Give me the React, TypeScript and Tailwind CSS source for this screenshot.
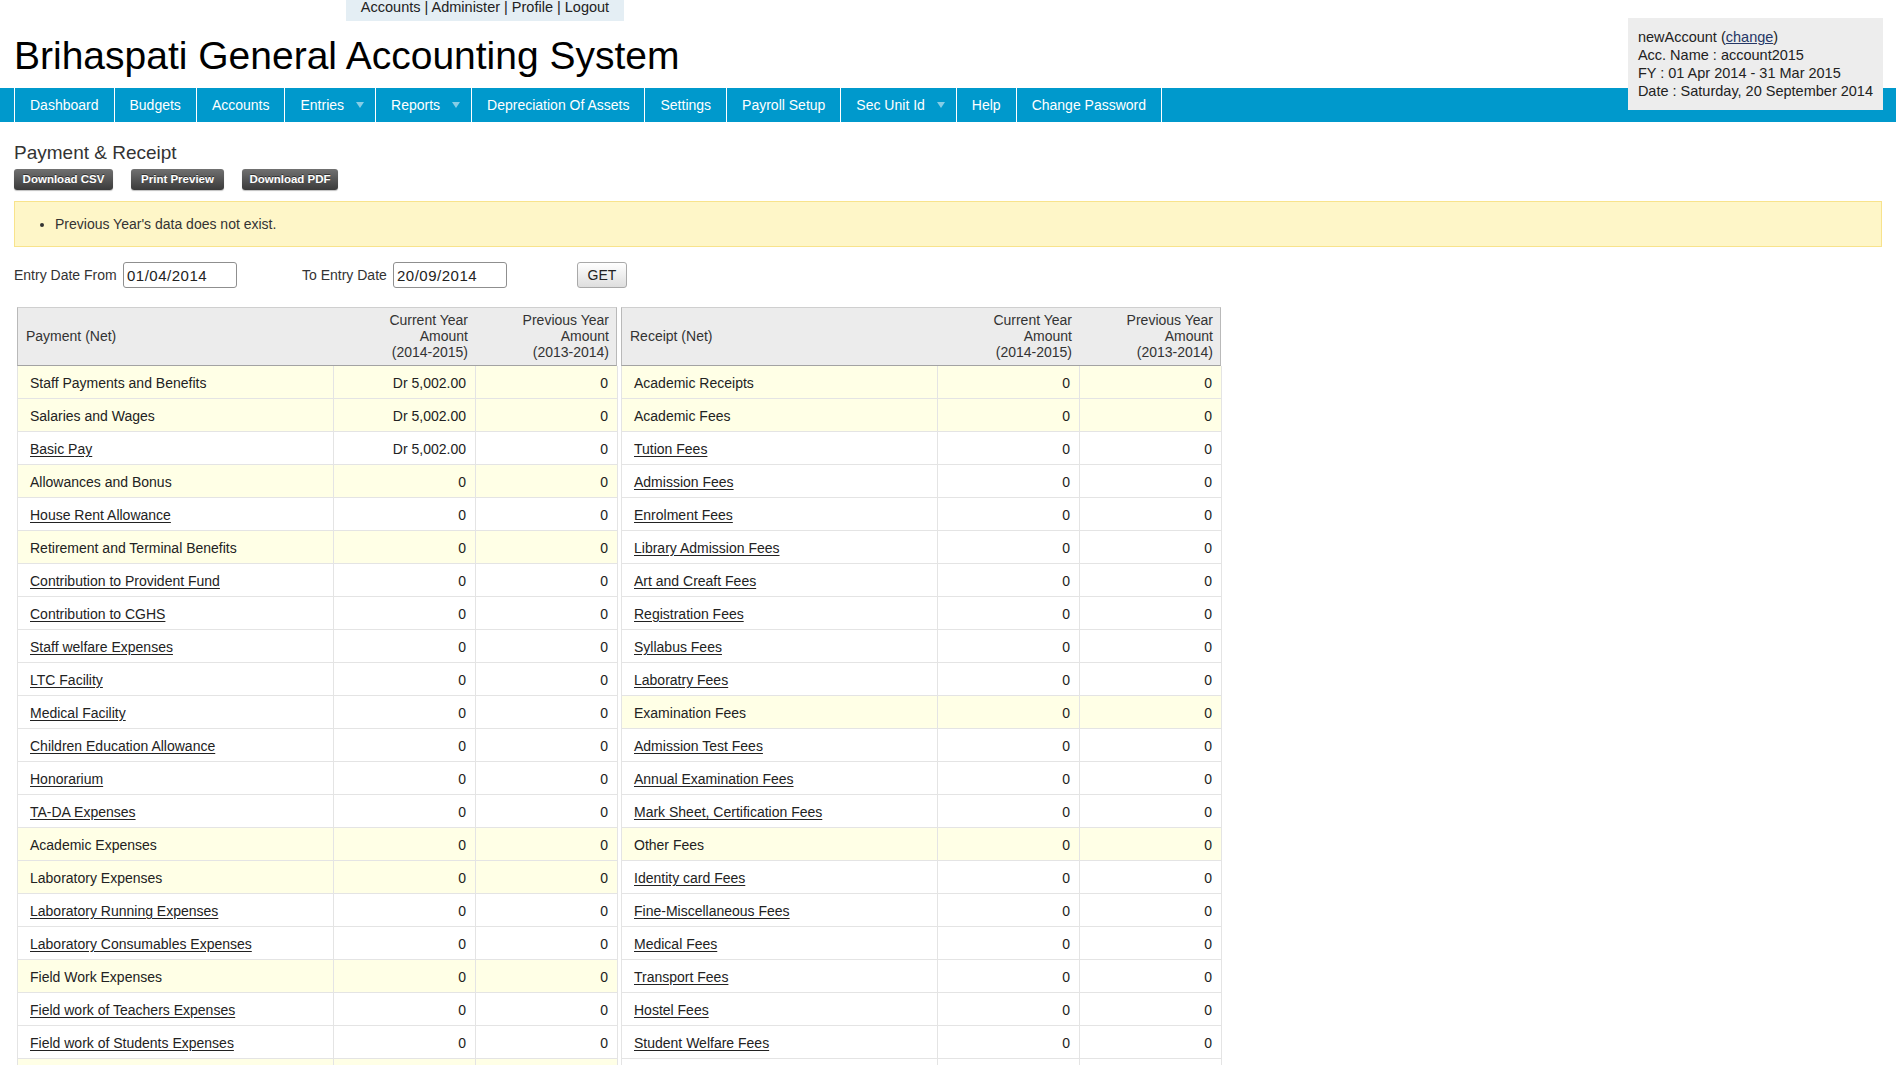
import React from "react";

type Row = { name: string; cur: string; prev: string; link: boolean };

const g = (name: string, cur = "0"): Row => ({ name, cur, prev: "0", link: false });
const l = (name: string, cur = "0"): Row => ({ name, cur, prev: "0", link: true });

const payments: Row[] = [
  g("Staff Payments and Benefits", "Dr 5,002.00"),
  g("Salaries and Wages", "Dr 5,002.00"),
  l("Basic Pay", "Dr 5,002.00"),
  g("Allowances and Bonus"),
  l("House Rent Allowance"),
  g("Retirement and Terminal Benefits"),
  l("Contribution to Provident Fund"),
  l("Contribution to CGHS"),
  l("Staff welfare Expenses"),
  l("LTC Facility"),
  l("Medical Facility"),
  l("Children Education Allowance"),
  l("Honorarium"),
  l("TA-DA Expenses"),
  g("Academic Expenses"),
  g("Laboratory Expenses"),
  l("Laboratory Running Expenses"),
  l("Laboratory Consumables Expenses"),
  g("Field Work Expenses"),
  l("Field work of Teachers Expenses"),
  l("Field work of Students Expenses"),
  g("Library Expenses"),
  l("Books and Journals"),
];

const receipts: Row[] = [
  g("Academic Receipts"),
  g("Academic Fees"),
  l("Tution Fees"),
  l("Admission Fees"),
  l("Enrolment Fees"),
  l("Library Admission Fees"),
  l("Art and Creaft Fees"),
  l("Registration Fees"),
  l("Syllabus Fees"),
  l("Laboratry Fees"),
  g("Examination Fees"),
  l("Admission Test Fees"),
  l("Annual Examination Fees"),
  l("Mark Sheet, Certification Fees"),
  g("Other Fees"),
  l("Identity card Fees"),
  l("Fine-Miscellaneous Fees"),
  l("Medical Fees"),
  l("Transport Fees"),
  l("Hostel Fees"),
  l("Student Welfare Fees"),
  l("Internet Fees"),
  l("Other Academic Fees"),
];

const navItems: { label: string; drop?: boolean }[] = [
  { label: "Dashboard" },
  { label: "Budgets" },
  { label: "Accounts" },
  { label: "Entries", drop: true },
  { label: "Reports", drop: true },
  { label: "Depreciation Of Assets" },
  { label: "Settings" },
  { label: "Payroll Setup" },
  { label: "Sec Unit Id", drop: true },
  { label: "Help" },
  { label: "Change Password" },
];

function ReportTable({ title, rows }: { title: string; rows: Row[] }) {
  return (
    <div className="w-[600px] text-[14px]">
      <div className="grid grid-cols-[316px_142px_142px] border border-[#b9b9b9] border-t-[#cfcfcf] border-b-[#a3a3a3] bg-[#ececec] text-[#333]">
        <div className="flex items-center pl-[8px]">{title}</div>
        <div className="pt-[4px] pb-[5px] pr-[8px] text-right leading-[16px]">
          <div>Current Year</div>
          <div>Amount</div>
          <div>(2014-2015)</div>
        </div>
        <div className="pt-[4px] pb-[5px] pr-[9px] text-right leading-[16px]">
          <div>Previous Year</div>
          <div>Amount</div>
          <div>(2013-2014)</div>
        </div>
      </div>
      {rows.map((r, i) => (
        <div
          key={i}
          className={`grid grid-cols-[316px_142px_142px] border-l border-[#e4e4e4] leading-[16px] ${
            r.link ? "bg-white" : "bg-[#ffffe6]"
          }`}
        >
          <div className="border-r border-b border-[#e4e4e4] pt-[9px] pb-[7px] pl-[12px] whitespace-nowrap">
            {r.link ? (
              <a href="#" className="text-[#222] underline underline-offset-[2px]">
                {r.name}
              </a>
            ) : (
              r.name
            )}
          </div>
          <div className="border-r border-b border-[#e4e4e4] pt-[9px] pb-[7px] pr-[9px] text-right">{r.cur}</div>
          <div className="border-r border-b border-[#e4e4e4] pt-[9px] pb-[7px] pr-[9px] text-right">{r.prev}</div>
        </div>
      ))}
    </div>
  );
}

export default function App() {
  return (
    <div className="relative min-h-screen bg-white text-[#222] font-['Liberation_Sans',Arial,sans-serif]">
      <div className="ml-[346px] h-[21px] w-[278px] bg-[#e4eef4] text-center text-[14.5px] leading-[15px] text-[#222]">
        Accounts | Administer | Profile | Logout
      </div>

      <h1 className="mt-[13px] pl-[14px] text-[39px] leading-[44px] text-black font-normal">
        Brihaspati General Accounting System
      </h1>

      <nav className="mt-[10px] flex h-[34px] bg-[#0099cc] pl-[14px] text-[14px] text-white">
        {navItems.map((n, i) => (
          <div
            key={n.label}
            className={`flex items-center border-r border-white ${i === 0 ? "border-l" : ""} ${
              n.drop ? "pl-[15px] pr-[11px]" : "px-[15px]"
            }`}
          >
            <span>{n.label}</span>
            {n.drop && (
              <span className="ml-[12px] inline-block h-0 w-0 border-l-[4.5px] border-r-[4.5px] border-t-[6px] border-l-transparent border-r-transparent border-t-[#86cde6]" />
            )}
          </div>
        ))}
      </nav>

      <div className="absolute right-[13px] top-[18px] bg-[#ededed] p-[10px] text-[14.5px] leading-[18px] text-[#222]">
        <div>
          newAccount (
          <a href="#" className="text-[#253766] underline">
            change
          </a>
          )
        </div>
        <div>Acc. Name : account2015</div>
        <div>FY : 01 Apr 2014 - 31 Mar 2015</div>
        <div>Date : Saturday, 20 September 2014</div>
      </div>

      <main className="px-[14px]">
        <h2 className="mt-[20px] text-[19px] leading-[22px] text-[#333] font-normal">Payment &amp; Receipt</h2>

        <div className="mt-[5px] flex gap-[18px]">
          {[
            ["Download CSV", "w-[99px]"],
            ["Print Preview", "w-[93px]"],
            ["Download PDF", "w-[96px]"],
          ].map(([t, w]) => (
            <button
              key={t}
              className={`${w} h-[21px] rounded-[3px] bg-gradient-to-b from-[#717171] to-[#3b3b3b] text-[11.5px] font-bold leading-[21px] text-white shadow-[0_1px_1px_rgba(0,0,0,0.25)] [text-shadow:0_-1px_0_rgba(0,0,0,0.5)]`}
            >
              {t}
            </button>
          ))}
        </div>

        <div className="mt-[11px] flex h-[46px] items-center border border-[#f8e38c] bg-[#fef6c8] text-[14px] text-[#333]">
          <ul className="list-disc pl-[40px]">
            <li>Previous Year's data does not exist.</li>
          </ul>
        </div>

        <div className="mt-[15px] flex h-[26px] items-center text-[14px] text-[#333]">
          <span className="w-[109px]">Entry Date From</span>
          <input
            readOnly
            value="01/04/2014"
            className="h-[26px] w-[114px] rounded-[3px] border border-[#8f8f8f] bg-white px-[3px] text-[15px] tracking-[0.5px] text-[#222] outline-none"
          />
          <span className="ml-[65px] w-[91px]">To Entry Date</span>
          <input
            readOnly
            value="20/09/2014"
            className="h-[26px] w-[114px] rounded-[3px] border border-[#8f8f8f] bg-white px-[3px] text-[15px] tracking-[0.5px] text-[#222] outline-none"
          />
          <button className="ml-[70px] h-[26px] w-[50px] rounded-[3px] border border-[#a9a9a9] bg-gradient-to-b from-white to-[#dedede] text-[14px] text-[#222]">
            GET
          </button>
        </div>

        <div className="mt-[19px] flex gap-[4px] pl-[3px] pb-[40px]">
          <ReportTable title="Payment (Net)" rows={payments} />
          <ReportTable title="Receipt (Net)" rows={receipts} />
        </div>
      </main>
    </div>
  );
}
